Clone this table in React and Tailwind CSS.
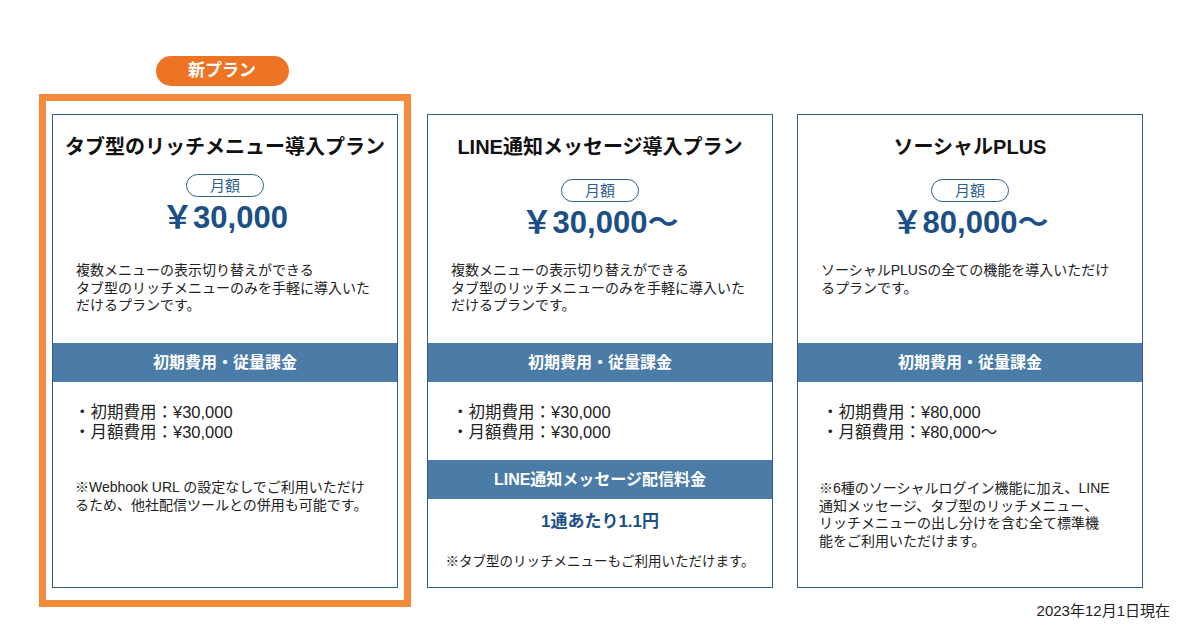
const font = { fontFamily: '"Liberation Sans", "Noto Sans CJK JP", sans-serif' }

function Band({ children }) {
  return (
    <div className="h-[39px] bg-[#4a7ca7] flex items-center justify-center text-white text-[16px] font-bold">
      {children}
    </div>
  )
}

function Card({ title, price, desc, fees, feePad = 'pl-[24px]', pillGap, descGap, children }) {
  return (
    <div className="w-[346px] h-[474px] border border-[#2f5f8f] bg-white flex flex-col">
      {/* top section */}
      <div className="h-[228px] flex flex-col items-center pt-[18px]">
        <h2 className="text-[20px] leading-[28px] font-bold text-[#111] whitespace-nowrap">{title}</h2>
        <div className={`${pillGap} w-[78px] h-[23px] rounded-full border border-[#2f5f8f] flex items-center justify-center text-[15px] leading-none text-[#2f5f8f]`}>
          月額
        </div>
        <div className="mt-[3px] text-[31px] leading-[36px] font-bold text-[#1b4f86] whitespace-nowrap">{price}</div>
        <p className={`${descGap} self-stretch px-[23px] text-[14px] leading-[17.5px] text-[#222] whitespace-nowrap`}>
          {desc}
        </p>
      </div>

      <Band>初期費用・従量課金</Band>

      <div className={`pt-[20px] ${feePad} text-[16.5px] leading-[20px] text-[#222]`}>
        {fees.map((f) => <div key={f}>{f}</div>)}
      </div>

      {children}
    </div>
  )
}

export default function App() {
  return (
    <main className="w-[1200px] h-[630px] bg-white overflow-hidden" style={font}>
      <div className="flex items-start pt-[56px] pl-[39px] gap-[16px]">
        {/* new plan */}
        <div className="w-[372px] flex flex-col items-center">
          <div className="w-[133px] h-[30px] rounded-full bg-[#ed7425] text-white text-[17px] font-bold flex items-center justify-center mr-[6px]">
            新プラン
          </div>
          <div className="mt-[8px] border-[7px] border-[#f68a3b] px-[6px] pt-[13px] pb-[12px]">
            <Card
              title="タブ型のリッチメニュー導入プラン"
              price="￥30,000"
              pillGap="mt-[13px]"
              descGap="mt-[26px]"
              feePad="pl-[21px]"
              desc={<>複数メニューの表示切り替えができる<br />タブ型のリッチメニューのみを手軽に導入いた<br />だけるプランです。</>}
              fees={['・初期費用：¥30,000', '・月額費用：¥30,000']}
            >
              <p className="mt-[37px] px-[22px] text-[14px] leading-[17.5px] text-[#222] whitespace-nowrap">
                ※Webhook URL の設定なしでご利用いただけ<br />るため、他社配信ツールとの併用も可能です。
              </p>
            </Card>
          </div>
        </div>

        <div className="mt-[58px] flex gap-[24px]">
          <Card
            title="LINE通知メッセージ導入プラン"
            price="￥30,000〜"
            pillGap="mt-[18px]"
            descGap="mt-[21px]"
            desc={<>複数メニューの表示切り替えができる<br />タブ型のリッチメニューのみを手軽に導入いた<br />だけるプランです。</>}
            fees={['・初期費用：¥30,000', '・月額費用：¥30,000']}
          >
            <div className="mt-[18px]">
              <Band>LINE通知メッセージ配信料金</Band>
            </div>
            <div className="mt-[11px] text-center text-[17px] leading-[24px] font-bold text-[#1b4f86]">1通あたり1.1円</div>
            <p className="mt-[19px] text-center text-[13.5px] leading-[18px] text-[#222] whitespace-nowrap">
              ※タブ型のリッチメニューもご利用いただけます。
            </p>
          </Card>

          <Card
            title="ソーシャルPLUS"
            price="￥80,000〜"
            pillGap="mt-[18px]"
            descGap="mt-[21px]"
            desc={<>ソーシャルPLUSの全ての機能を導入いただけ<br />るプランです。</>}
            fees={['・初期費用：¥80,000', '・月額費用：¥80,000〜']}
          >
            <p className="mt-[38px] px-[21px] text-[14px] leading-[17.5px] text-[#222] whitespace-nowrap">
              ※6種のソーシャルログイン機能に加え、LINE<br />通知メッセージ、タブ型のリッチメニュー、<br />リッチメニューの出し分けを含む全て標準機<br />能をご利用いただけます。
            </p>
          </Card>
        </div>
      </div>

      <div className="-mt-[6px] pr-[30px] text-right text-[15px] leading-[20px] text-[#222]">
        2023年12月1日現在
      </div>
    </main>
  )
}
